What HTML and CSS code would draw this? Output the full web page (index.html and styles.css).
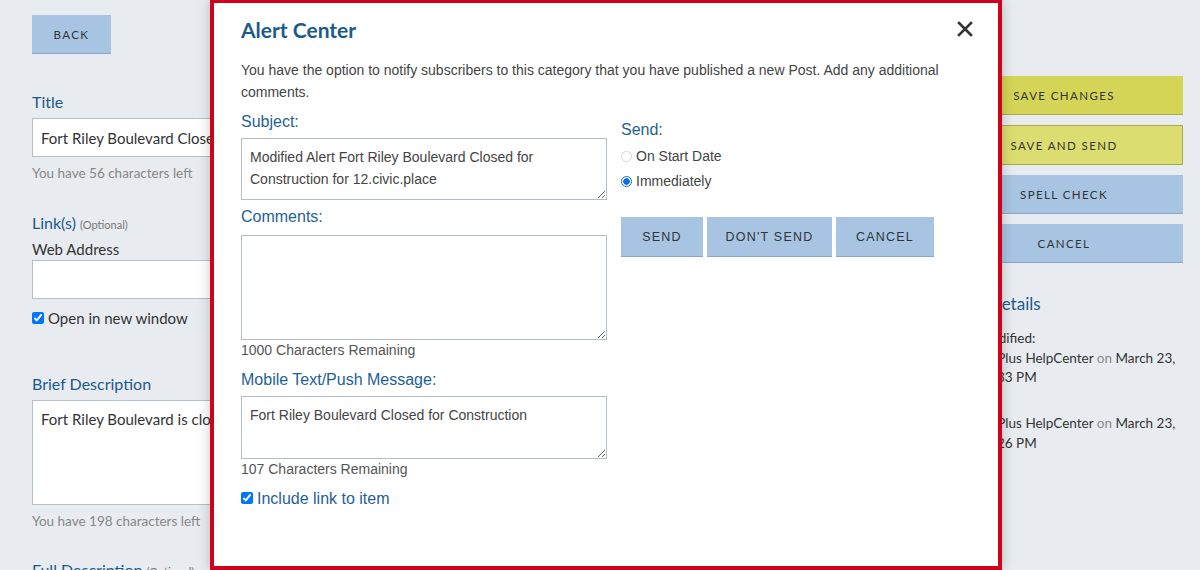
FILE: index.html
```html
<!DOCTYPE html>
<html lang="en">
<head>
    <meta charset="UTF-8">
    <meta name="viewport" content="width=device-width, initial-scale=1.0">
    <title>Edit Alert</title>
    <link rel="stylesheet" href="styles.css">
</head>
<body>
    <div class="page">
        <div class="form-col">
            <button class="btn btn-blue back-btn">BACK</button>

            <label class="field-label title-label">Title</label>
            <input class="text-input" type="text" value="Fort Riley Boulevard Closed for Construction">
            <p class="hint">You have 56 characters left</p>

            <label class="field-label links-label">Link(s) <span class="optional">(Optional)</span></label>
            <label class="sub-label">Web Address</label>
            <input class="text-input web-input" type="text" value="">
            <label class="check-row"><input type="checkbox" checked> Open in new window</label>

            <label class="field-label brief-label">Brief Description</label>
            <textarea class="text-area">Fort Riley Boulevard is closed for construction between Anderson Avenue and Claflin Road.</textarea>
            <p class="hint">You have 198 characters left</p>

            <label class="field-label full-label">Full Description <span class="optional">(Optional)</span></label>
        </div>

        <aside class="side-col">
            <button class="btn btn-yellow">SAVE CHANGES</button>
            <button class="btn btn-yellow-light">SAVE AND SEND</button>
            <button class="btn btn-blue">SPELL CHECK</button>
            <button class="btn btn-blue">CANCEL</button>

            <div class="details">
                <h3>Item Details</h3>
                <p>Last Modified:<br>by CivicPlus HelpCenter <span class="muted">on</span> March 23,<br>2021 3:33 PM</p>
                <p>Created:<br>by CivicPlus HelpCenter <span class="muted">on</span> March 23,<br>2021 2:26 PM</p>
            </div>
        </aside>
    </div>

    <div class="modal">
        <div class="modal-head">
            <h2>Alert Center</h2>
            <button class="close-btn" aria-label="Close">
                <svg width="16" height="16" viewBox="0 0 16 16">
                    <path d="M2 2 L14 14 M14 2 L2 14" stroke="#333" stroke-width="2.6" stroke-linecap="square"/>
                </svg>
            </button>
        </div>
        <p class="modal-intro">You have the option to notify subscribers to this category that you have published a new Post. Add any additional comments.</p>

        <div class="modal-grid">
            <div class="modal-left">
                <label class="m-label">Subject:</label>
                <textarea class="m-area subject-area">Modified Alert Fort Riley Boulevard Closed for Construction for 12.civic.place</textarea>

                <label class="m-label comments-label">Comments:</label>
                <textarea class="m-area comments-area"></textarea>
                <p class="m-count">1000 Characters Remaining</p>

                <label class="m-label mobile-label">Mobile Text/Push Message:</label>
                <textarea class="m-area mobile-area">Fort Riley Boulevard Closed for Construction</textarea>
                <p class="m-count">107 Characters Remaining</p>

                <label class="m-check"><input type="checkbox" checked>Include link to item</label>
            </div>

            <div class="modal-right">
                <label class="m-label send-label">Send:</label>
                <label class="radio-row"><input type="radio" name="send"> On Start Date</label>
                <label class="radio-row"><input type="radio" name="send" checked> Immediately</label>

                <div class="m-actions">
                    <button class="m-btn send-btn">SEND</button>
                    <button class="m-btn dont-btn">DON'T SEND</button>
                    <button class="m-btn cancel-btn">CANCEL</button>
                </div>
            </div>
        </div>
    </div>
</body>
</html>
```

FILE: styles.css
```css
* {
    box-sizing: border-box;
}

body {
    margin: 0;
    padding: 0;
    background-color: #e8ecf0;
    color: #333;
    font-family: Lato, "Open Sans", sans-serif;
    overflow: hidden;
    height: 570px;
}

.page {
    display: flex;
    gap: 40px;
    padding: 15px 17px 0 32px;
}

.form-col {
    flex: 1;
    display: flex;
    flex-direction: column;
    align-items: flex-start;
}

.side-col {
    width: 238px;
    padding-top: 61px;
    display: flex;
    flex-direction: column;
    gap: 10px;
}

.btn {
    font-family: Lato, sans-serif;
    font-size: 11.5px;
    letter-spacing: 1.4px;
    color: #333;
    border: none;
    height: 39px;
    cursor: pointer;
}

.btn-blue {
    background-color: #a7c5e3;
    border-bottom: 1px solid #8aa6c4;
}

.btn-yellow {
    background-color: #d4d556;
    border-bottom: 1px solid #aaaa3c;
}

.btn-yellow-light {
    background-color: #dcdd70;
    border: 1px solid #a9aa40;
    height: 40px;
}

.back-btn {
    width: 79px;
}

.field-label {
    display: block;
    font-size: 16px;
    line-height: 20px;
    height: 20px;
    color: #1b5a8c;
}

.title-label {
    margin-top: 38px;
}

.links-label {
    margin-top: 31px;
}

.brief-label {
    margin-top: 46px;
}

.full-label {
    margin-top: 30px;
}

.optional {
    font-size: 11px;
    line-height: 14px;
    color: #777;
}

.sub-label {
    display: block;
    margin-top: 6px;
    font-size: 15px;
    line-height: 20px;
    color: #333;
}

.text-input {
    width: 100%;
    height: 39px;
    margin-top: 6px;
    padding: 0 8px;
    border: 1px solid #b6c0cb;
    background: #fff;
    font-family: Lato, sans-serif;
    font-size: 15px;
    color: #333;
}

.web-input {
    margin-top: 1px;
}

.text-area {
    width: 100%;
    height: 105px;
    margin-top: 6px;
    padding: 8px;
    border: 1px solid #b6c0cb;
    background: #fff;
    font-family: Lato, sans-serif;
    font-size: 15px;
    line-height: 20px;
    color: #333;
    resize: none;
}

.hint {
    margin: 7px 0 0;
    font-size: 13.5px;
    line-height: 18px;
    color: #878787;
}

.check-row {
    display: flex;
    align-items: center;
    gap: 4px;
    margin-top: 9px;
    font-size: 15px;
    line-height: 20px;
}

.check-row input {
    margin: 0;
    width: 12px;
    height: 12px;
}

.details {
    margin-top: 20px;
    padding-left: 6px;
    white-space: nowrap;
}

.details h3 {
    margin: 0;
    font-size: 17px;
    line-height: 22px;
    font-weight: 400;
    color: #1b5a8c;
}

.details p {
    margin: 14px 0 0;
    font-size: 13.5px;
    line-height: 19.5px;
    color: #333;
}

.details p + p {
    margin-top: 7px;
}

.muted {
    color: #8a8a8a;
}

/* modal dialog lies over the page */
.modal {
    position: absolute;
    top: 0;
    left: 210px;
    width: 792px;
    height: 570px;
    background: #fff;
    border: 4px solid #d0021b;
    border-top-width: 3px;
    box-shadow: 0 0 12px rgba(0, 0, 0, 0.22);
    padding: 0 27px;
    font-family: "Liberation Sans", Arial, sans-serif;
}

.modal-head {
    display: flex;
    justify-content: space-between;
    align-items: center;
    height: 52px;
}

.modal-head h2 {
    margin: 0;
    font-family: Lato, sans-serif;
    font-size: 21px;
    font-weight: 700;
    color: #1b5a8b;
}

.close-btn {
    background: none;
    border: none;
    padding: 0;
    margin-right: -2px;
    display: flex;
    cursor: pointer;
}

.modal-intro {
    margin: 4px 0 0;
    font-size: 14px;
    line-height: 22px;
    color: #444;
}

.modal-grid {
    display: grid;
    grid-template-columns: 366px 1fr;
    gap: 14px;
}

.modal-left,
.modal-right {
    display: flex;
    flex-direction: column;
    align-items: flex-start;
}

.m-label {
    display: block;
    font-size: 16px;
    line-height: 20px;
    color: #1f5f96;
}

.modal-left .m-label:first-child {
    margin-top: 9px;
}

.comments-label {
    margin-top: 7px;
}

.mobile-label {
    margin-top: 11px;
}

.m-area {
    width: 100%;
    margin-top: 6px;
    padding: 7px 8px;
    border: 1px solid #b4bec8;
    font-family: "Liberation Sans", Arial, sans-serif;
    font-size: 14px;
    line-height: 22px;
    color: #444;
    resize: vertical;
}

.subject-area {
    height: 62px;
}

.comments-area {
    height: 105px;
    margin-top: 8px;
}

.mobile-area {
    height: 63px;
    margin-top: 6px;
}

.m-count {
    margin: 1px 0 0;
    font-size: 14px;
    line-height: 18px;
    color: #555;
}

.m-check {
    display: flex;
    align-items: center;
    margin-top: 11px;
    font-size: 16px;
    line-height: 20px;
    color: #1f5f96;
}

.m-check input {
    margin: 0 4px 3px 0;
    width: 12px;
    height: 12px;
}

.send-label {
    margin-top: 17px;
}

.radio-row {
    display: flex;
    align-items: center;
    gap: 4px;
    margin-top: 6px;
    font-size: 14px;
    line-height: 20px;
    color: #444;
}

.radio-row + .radio-row {
    margin-top: 5px;
}

.radio-row input {
    appearance: none;
    margin: 0;
    width: 11px;
    height: 11px;
    border-radius: 50%;
    border: 1px solid #d6d6d6;
    background: #fff;
}

.radio-row input:checked {
    border: 1px solid #0b6ee8;
    background: radial-gradient(circle, #0b6ee8 0 3px, #fff 3.5px);
}

.m-actions {
    display: flex;
    gap: 4px;
    margin-top: 26px;
}

.m-btn {
    height: 40px;
    border: none;
    border-bottom: 1px solid #8aa6c4;
    background-color: #a7c5e3;
    font-family: "Liberation Sans", Arial, sans-serif;
    font-size: 12.5px;
    letter-spacing: 1.2px;
    color: #333;
    cursor: pointer;
}

.send-btn {
    width: 82px;
}

.dont-btn {
    width: 125px;
}

.cancel-btn {
    width: 98px;
}
```
